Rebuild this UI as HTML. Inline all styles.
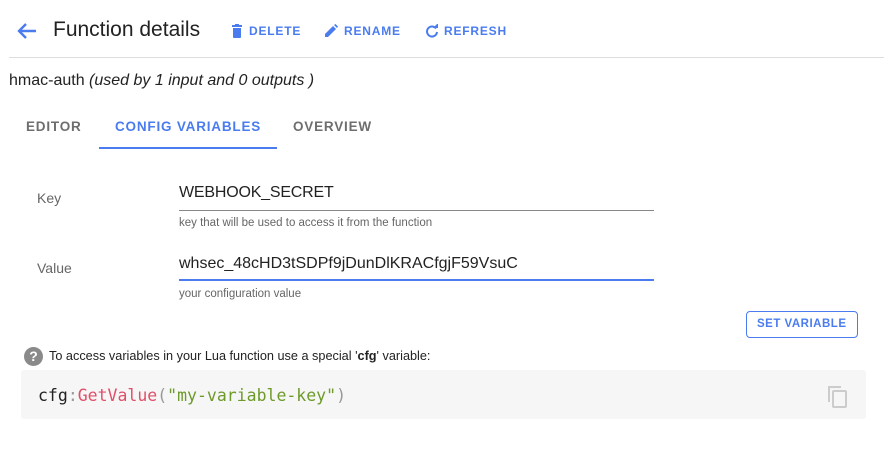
<!DOCTYPE html>
<html><head><style>
body{margin:0;width:884px;height:449px;background:#fff;font-family:"Liberation Sans",sans-serif;color:#222;position:relative;overflow:hidden}
.a{position:absolute;white-space:nowrap}
.btn{color:#4a7cf0;font-size:12px;font-weight:bold;letter-spacing:0.8px}
.tab{font-size:13.5px;font-weight:bold;letter-spacing:0.8px;color:#6e6e6e}
.lbl{font-size:14px;color:#666}
.hint{font-size:11.5px;color:#666}
.inp{font-size:16px;color:#222}
</style></head><body>
<svg class="a" style="left:16px;top:22px" width="22" height="18" viewBox="0 0 22 18"><path d="M20 9H4M10 2L3 9l7 7" stroke="#4a7cf0" stroke-width="2.4" fill="none"/></svg>
<div class="a" style="left:53px;top:18px;font-size:21px;color:#222">Function details</div>
<svg class="a" style="left:231px;top:24px" width="12" height="14" viewBox="0 0 12 14"><path d="M1 1h10v2H1zM4 0h4v1H4zM2 4h8v9a1 1 0 0 1-1 1H3a1 1 0 0 1-1-1z" fill="#4a7cf0"/></svg>
<div class="a btn" style="left:249px;top:24px">DELETE</div>
<svg class="a" style="left:324px;top:24px" width="14" height="14" viewBox="0 0 14 14"><path d="M1 13v-3l8-8 3 3-8 8zM10 1l1.5-1 2.5 2.5-1 1.5z" fill="#4a7cf0"/></svg>
<div class="a btn" style="left:344px;top:24px">RENAME</div>
<svg class="a" style="left:425px;top:24px" width="14" height="14" viewBox="0 0 14 14"><path d="M11 4.5A5 5 0 1 0 12 8" stroke="#4a7cf0" stroke-width="2" fill="none"/><path d="M8 4h5V-1z" fill="#4a7cf0"/></svg>
<div class="a btn" style="left:444px;top:24px">REFRESH</div>
<div class="a" style="left:9px;top:57px;width:875px;height:1px;background:#ddd"></div>
<div class="a" style="left:9px;top:72px;font-size:16px">hmac-auth <i>(used by 1 input and 0 outputs )</i></div>
<div class="a tab" style="left:26px;top:119px">EDITOR</div>
<div class="a tab" style="left:115px;top:119px;color:#4a7cf0">CONFIG VARIABLES</div>
<div class="a tab" style="left:293px;top:119px">OVERVIEW</div>
<div class="a" style="left:99px;top:147px;width:178px;height:2px;background:#4a7cf0"></div>
<div class="a lbl" style="left:37px;top:190px">Key</div>
<div class="a inp" style="left:179px;top:184px;letter-spacing:-0.2px">WEBHOOK_SECRET</div>
<div class="a" style="left:179px;top:210px;width:475px;height:1px;background:#888"></div>
<div class="a hint" style="left:179px;top:217px">key that will be used to access it from the function</div>
<div class="a lbl" style="left:37px;top:260px">Value</div>
<div class="a inp" style="left:179px;top:255px">whsec_48cHD3tSDPf9jDunDlKRACfgjF59VsuC</div>
<div class="a" style="left:179px;top:279px;width:475px;height:2px;background:#4a7cf0"></div>
<div class="a hint" style="left:179px;top:288px">your configuration value</div>
<div class="a" style="left:746px;top:311px;width:110px;height:25px;border:1px solid #4a7cf0;border-radius:4px;box-sizing:content-box"></div>
<div class="a btn" style="left:757px;top:318px;font-size:11.5px;letter-spacing:0.5px">SET VARIABLE</div>
<div class="a" style="left:24px;top:347px;width:19px;height:19px;border-radius:50%;background:#8a8a8a;color:#fff;font-size:14px;font-weight:bold;text-align:center;line-height:19px">?</div>
<div class="a" style="left:49px;top:349px;font-size:12.7px">To access variables in your Lua function use a special '<b>cfg</b>' variable:</div>
<div class="a" style="left:21px;top:370px;width:845px;height:49px;background:#f6f6f6;border-radius:3px"></div>
<div class="a" style="left:38px;top:386px;font-family:'DejaVu Sans Mono','Liberation Mono',monospace;font-size:16.5px;color:#222">cfg<span style="color:#999">:</span><span style="color:#e0506a">GetValue</span><span style="color:#999">(</span><span style="color:#6d9a2a">"my-variable-key"</span><span style="color:#999">)</span></div>
<svg class="a" style="left:827px;top:385px" width="22" height="24" viewBox="0 0 22 24"><path d="M2 17V2h12" stroke="#ccc" stroke-width="2" fill="none"/><rect x="6" y="6" width="13" height="16" rx="1" stroke="#ccc" stroke-width="2" fill="none"/></svg>
</body></html>
